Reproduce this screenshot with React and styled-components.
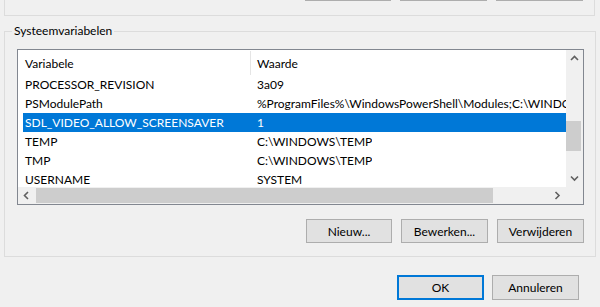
import React from 'react';
import styled, { createGlobalStyle } from 'styled-components';

const GlobalStyle = createGlobalStyle`
  html, body {
    margin: 0;
    padding: 0;
    background: #f0f0f0;
    overflow: hidden;
  }
  body {
    font-family: "Segoe UI", Lato, "Noto Sans", sans-serif;
    font-size: 12px;
    color: #000;
  }
`;

const Window = styled.div`
  width: 600px;
  height: 307px;
  overflow: hidden;
  display: flex;
  flex-direction: column;
`;

// only the bottom of the user variables group is still in view
const UserGroup = styled.div`
  box-sizing: border-box;
  margin: -30px 5px 0 4px;
  height: 46px;
  border: 1px solid #dcdcdc;
  display: flex;
  justify-content: flex-end;
  align-items: flex-end;
  gap: 9px;
  padding: 0 11px 14px 0;
`;

const GroupBox = styled.div`
  position: relative;
  margin: 15px 4px 0 4px;
  border: 1px solid #dcdcdc;
  padding: 17px 11px 13px 12px;
  display: flex;
  flex-direction: column;
`;

const Legend = styled.span`
  position: absolute;
  top: -9px;
  left: 7px;
  padding: 0 2px;
  background: #f0f0f0;
  line-height: 16px;
`;

const ListView = styled.div`
  height: 156px;
  box-sizing: border-box;
  border: 1px solid #828790;
  background: #fff;
  display: grid;
  grid-template-columns: 1fr 17px;
  grid-template-rows: 1fr 17px;
`;

const View = styled.div`
  overflow: hidden;
  white-space: nowrap;
`;

const Header = styled.div`
  display: flex;
  height: 25px;
  align-items: stretch;
`;

const HeaderCell = styled.div`
  width: ${props => props.width ? props.width + 'px' : 'auto'};
  flex: ${props => props.width ? 'none' : '1'};
  padding-left: ${props => props.pad}px;
  display: flex;
  align-items: center;
  border-right: ${props => props.width ? '1px solid #e5e5e5' : 'none'};
  margin-top: 1px;
`;

const Row = styled.div`
  display: flex;
  height: 19px;
  align-items: center;
  margin-left: 5px;
  width: 700px;
  background: ${props => props.selected ? '#0078d7' : 'transparent'};
  color: ${props => props.selected ? '#fff' : '#000'};
`;

const Cell = styled.div`
  width: ${props => props.width ? props.width + 'px' : 'auto'};
  flex: none;
  padding-left: ${props => props.pad}px;
  box-sizing: border-box;
  overflow: hidden;
`;

const VScroll = styled.div`
  background: #f0f0f0;
  display: flex;
  flex-direction: column;
`;

const HScroll = styled.div`
  background: #f0f0f0;
  display: flex;
`;

const Corner = styled.div`
  background: #f0f0f0;
`;

const ArrowBtn = styled.div`
  width: 17px;
  height: 17px;
  flex: none;
  display: flex;
  align-items: center;
  justify-content: center;
`;

const VTrack = styled.div`
  flex: 1;
  padding-top: 54px;
`;

const VThumb = styled.div`
  width: 15px;
  height: 30px;
  background: #cdcdcd;
`;

const HTrack = styled.div`
  flex: 1;
  display: flex;
  align-items: center;
`;

const HThumb = styled.div`
  height: 15px;
  width: 457px;
  margin-left: 1px;
  background: #cdcdcd;
`;

const ButtonRow = styled.div`
  display: flex;
  justify-content: flex-end;
  gap: ${props => props.gap || 9}px;
  margin-top: ${props => props.top || 0}px;
  padding-right: ${props => props.right || 0}px;
`;

const Button = styled.button`
  width: ${props => props.width || 86}px;
  height: ${props => props.height || 24}px;
  flex: none;
  box-sizing: border-box;
  background: #e1e1e1;
  border: ${props => props.primary ? '2px solid #0078d7' : '1px solid #adadad'};
  font-family: inherit;
  font-size: 12px;
  color: #000;
  padding: 0;
  border-radius: 0;
`;

const Chevron = ({ dir }) => {
  const pts = {
    up: '1,5 4.5,1.5 8,5',
    down: '1,1.5 4.5,5 8,1.5',
    left: '5,1 1.5,4.5 5,8',
    right: '1.5,1 5,4.5 1.5,8',
  }[dir];
  const vertical = dir === 'up' || dir === 'down';
  return (
    <svg width={vertical ? 9 : 7} height={vertical ? 7 : 9} viewBox={vertical ? '0 0 9 7' : '0 0 7 9'}>
      <polyline points={pts} fill="none" stroke="#606060" strokeWidth="1.6" />
    </svg>
  );
};

const variables = [
  ['PROCESSOR_REVISION', '3a09'],
  ['PSModulePath', '%ProgramFiles%\\WindowsPowerShell\\Modules;C:\\WINDOWS\\system32\\WindowsPowerShell\\v1.0\\Modules'],
  ['SDL_VIDEO_ALLOW_SCREENSAVER', '1', true],
  ['TEMP', 'C:\\WINDOWS\\TEMP'],
  ['TMP', 'C:\\WINDOWS\\TEMP'],
  ['USERNAME', 'SYSTEM'],
];

export default function App() {
  return (
    <Window>
      <GlobalStyle />
      <UserGroup>
        <Button width={86} aria-label="Nieuw..." />
        <Button width={87} aria-label="Bewerken..." />
        <Button width={87} aria-label="Verwijderen" />
      </UserGroup>
      <GroupBox>
        <Legend>Systeemvariabelen</Legend>
        <ListView>
          <View>
            <Header>
              <HeaderCell width={225} pad={7}>Variabele</HeaderCell>
              <HeaderCell pad={6}>Waarde</HeaderCell>
            </Header>
            {variables.map(([name, value, selected]) => (
              <Row key={name} selected={selected}>
                <Cell width={227} pad={2}>{name}</Cell>
                <Cell pad={7}>{value}</Cell>
              </Row>
            ))}
          </View>
          <VScroll>
            <ArrowBtn><Chevron dir="up" /></ArrowBtn>
            <VTrack><VThumb /></VTrack>
            <ArrowBtn><Chevron dir="down" /></ArrowBtn>
          </VScroll>
          <HScroll>
            <ArrowBtn><Chevron dir="left" /></ArrowBtn>
            <HTrack><HThumb /></HTrack>
            <ArrowBtn><Chevron dir="right" /></ArrowBtn>
          </HScroll>
          <Corner />
        </ListView>
        <ButtonRow top={14}>
          <Button width={86}>Nieuw...</Button>
          <Button width={87}>Bewerken...</Button>
          <Button width={87}>Verwijderen</Button>
        </ButtonRow>
      </GroupBox>
      <ButtonRow top={18} right={21} gap={8}>
        <Button primary width={87} height={25}>OK</Button>
        <Button width={87} height={25}>Annuleren</Button>
      </ButtonRow>
    </Window>
  );
}
